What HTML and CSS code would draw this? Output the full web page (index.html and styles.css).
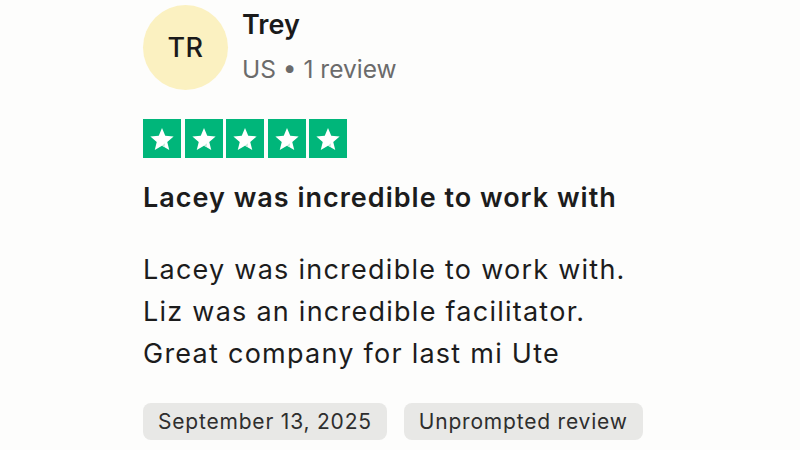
FILE: index.html
```html
<!DOCTYPE html>
<html>
<head>
<meta charset="utf-8">
<link rel="stylesheet" href="styles.css">
</head>
<body>
<div class="review">
  <div class="header">
    <div class="avatar">TR</div>
    <div class="who">
      <div class="name">Trey</div>
      <div class="meta">US • 1 review</div>
    </div>
  </div>
  <div class="stars">
    <span class="star"><svg viewBox="0 0 24 24"><path d="M12 3.2l2.6 6.2 6.7.5-5.1 4.4 1.6 6.5L12 17.3l-5.8 3.5 1.6-6.5-5.1-4.4 6.7-.5z" fill="#fff"/><path d="M14.4 15.4l-2.4 1.9 1.9 1.1z" fill="#b9e6d3"/></svg></span>
    <span class="star"><svg viewBox="0 0 24 24"><path d="M12 3.2l2.6 6.2 6.7.5-5.1 4.4 1.6 6.5L12 17.3l-5.8 3.5 1.6-6.5-5.1-4.4 6.7-.5z" fill="#fff"/><path d="M14.4 15.4l-2.4 1.9 1.9 1.1z" fill="#b9e6d3"/></svg></span>
    <span class="star"><svg viewBox="0 0 24 24"><path d="M12 3.2l2.6 6.2 6.7.5-5.1 4.4 1.6 6.5L12 17.3l-5.8 3.5 1.6-6.5-5.1-4.4 6.7-.5z" fill="#fff"/><path d="M14.4 15.4l-2.4 1.9 1.9 1.1z" fill="#b9e6d3"/></svg></span>
    <span class="star"><svg viewBox="0 0 24 24"><path d="M12 3.2l2.6 6.2 6.7.5-5.1 4.4 1.6 6.5L12 17.3l-5.8 3.5 1.6-6.5-5.1-4.4 6.7-.5z" fill="#fff"/><path d="M14.4 15.4l-2.4 1.9 1.9 1.1z" fill="#b9e6d3"/></svg></span>
    <span class="star"><svg viewBox="0 0 24 24"><path d="M12 3.2l2.6 6.2 6.7.5-5.1 4.4 1.6 6.5L12 17.3l-5.8 3.5 1.6-6.5-5.1-4.4 6.7-.5z" fill="#fff"/><path d="M14.4 15.4l-2.4 1.9 1.9 1.1z" fill="#b9e6d3"/></svg></span>
  </div>
  <h2 class="title">Lacey was incredible to work with</h2>
  <p class="body">Lacey was incredible to work with.<br>Liz was an incredible facilitator.<br>Great company for last mi Ute</p>
  <div class="chips">
    <span class="chip">September 13, 2025</span>
    <span class="chip">Unprompted review</span>
  </div>
</div>
</body>
</html>
```

FILE: styles.css
```css
html, body {
  margin: 0;
  padding: 0;
  background: #fdfdfc;
}
body {
  width: 800px;
  height: 450px;
  overflow: hidden;
  font-family: Inter, "Noto Sans", sans-serif;
  color: #1c1c1c;
}
.review {
  padding: 5px 0 0 143px;
}
.header {
  display: flex;
  align-items: flex-start;
  gap: 14px;
}
.avatar {
  width: 85px;
  height: 85px;
  border-radius: 50%;
  background: #fbf1c1;
  display: flex;
  align-items: center;
  justify-content: center;
  font-size: 27px;
  font-weight: 500;
  color: #1a1a1a;
  letter-spacing: 0.5px;
}
.who {
  padding-top: 3px;
}
.name {
  font-size: 27px;
  font-weight: 600;
  line-height: 34px;
  color: #1a1a1a;
}
.meta {
  margin-top: 12px;
  font-size: 24.5px;
  line-height: 30px;
  color: #6b6b6b;
}
.stars {
  display: flex;
  gap: 3.5px;
  margin-top: 29px;
}
.star {
  width: 38px;
  height: 39px;
  background: #00b67a;
  display: flex;
  align-items: center;
  justify-content: center;
}
.star svg {
  width: 30px;
  height: 30px;
}
.title {
  margin: 23px 0 0 0;
  font-size: 27px;
  font-weight: 600;
  line-height: 34px;
  letter-spacing: 1px;
  color: #1c1c1c;
}
.body {
  margin: 34px 0 0 0;
  font-size: 27px;
  line-height: 42px;
  letter-spacing: 1.25px;
  color: #1c1c1c;
}
.chips {
  display: flex;
  gap: 17px;
  margin-top: 28px;
}
.chip {
  background: #e8e8e6;
  border-radius: 8px;
  height: 37px;
  line-height: 37px;
  padding: 0 15px;
  font-size: 21px;
  letter-spacing: 0.8px;
  color: #2e2e2e;
}
```
